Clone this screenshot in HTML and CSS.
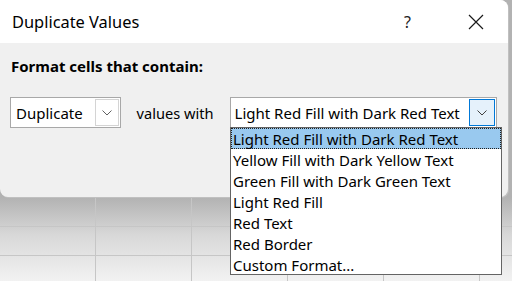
FILE: index.html
```html
<!DOCTYPE html>
<html>
<head>
<meta charset="utf-8">
<link rel="stylesheet" href="styles.css">
</head>
<body>
<div class="sheet">
  <div class="dialog">
    <div class="titlebar">
      <span class="title">Duplicate Values</span>
      <span class="help">?</span>
      <span class="close">
        <svg width="16" height="16" viewBox="0 0 16 16"><path d="M1 1 L15 15 M15 1 L1 15" stroke="#1a1a1a" stroke-width="1.2" fill="none"/></svg>
      </span>
    </div>
    <div class="content">
      <div class="label">Format cells that contain:</div>
      <div class="row">
        <div class="combo combo-small">
          <span class="combo-text">Duplicate</span>
          <span class="btn">
            <svg width="10" height="6" viewBox="0 0 10 6"><path d="M0.5 0.5 L5 5 L9.5 0.5" stroke="#606060" stroke-width="1" fill="none"/></svg>
          </span>
        </div>
        <span class="values">values with</span>
        <div class="combo combo-big">
          <span class="combo-text">Light Red Fill with Dark Red Text</span>
          <span class="btn btn-active">
            <svg width="10" height="6" viewBox="0 0 10 6"><path d="M0.5 0.5 L5 5 L9.5 0.5" stroke="#404040" stroke-width="1" fill="none"/></svg>
          </span>
        </div>
      </div>
    </div>
    <ul class="list">
      <li class="sel">Light Red Fill with Dark Red Text</li>
      <li>Yellow Fill with Dark Yellow Text</li>
      <li>Green Fill with Dark Green Text</li>
      <li>Light Red Fill</li>
      <li>Red Text</li>
      <li>Red Border</li>
      <li>Custom Format...</li>
    </ul>
  </div>
</div>
</body>
</html>
```
FILE: styles.css
```css
html, body {
  margin: 0;
  padding: 0;
}
body {
  width: 512px;
  height: 281px;
  overflow: hidden;
  font-family: "Noto Sans", "Open Sans", sans-serif;
  color: #000;
}
.sheet {
  width: 512px;
  height: 281px;
  background-color: #f4f4f4;
  background-image:
    linear-gradient(to right, transparent 95px, #c6c6c6 95px, #c6c6c6 96px, transparent 96px),
    linear-gradient(to bottom, transparent 226px, #c6c6c6 226px, #c6c6c6 227px, transparent 227px, transparent 255px, #c6c6c6 255px, #c6c6c6 256px, transparent 256px),
    linear-gradient(to bottom, #b2b2b2 197px, #d8d8d8 235px, #f2f2f2 281px);
  background-size: 96px 281px, 512px 281px, 512px 281px;
  background-repeat: repeat-x, no-repeat, no-repeat;
}
.dialog {
  position: relative;
  width: 508px;
  height: 197px;
  background: #f0f0f0;
  border-radius: 0 8px 8px 8px;
  box-shadow: 1px 1px 0 #c0c0c0;
}
.titlebar {
  height: 43px;
  background: #fff;
  border-radius: 0 8px 0 0;
  display: flex;
  align-items: center;
  padding-left: 12px;
}
.title {
  font-size: 16.4px;
  flex: 1;
}
.help {
  font-size: 16px;
  margin-right: 57px;
  color: #222;
}
.close {
  display: flex;
  margin-right: 24px;
}
.content {
  padding: 13px 11px 0 10px;
}
.label {
  font-weight: bold;
  font-size: 15px;
  line-height: 20px;
  margin-left: 1px;
}
.row {
  display: flex;
  align-items: center;
  margin-top: 21px;
  font-size: 15px;
}
.combo {
  box-sizing: border-box;
  height: 31px;
  border: 1px solid #a8a8a8;
  background: #fff;
  display: flex;
  align-items: center;
  padding: 1px 1px 1px 5px;
}
.combo-small {
  width: 112px;
}
.combo-big {
  width: 271px;
  padding-left: 4px;
}
.combo-text {
  flex: 1;
  white-space: nowrap;
}
.btn {
  box-sizing: border-box;
  width: 24px;
  height: 27px;
  border: 1px solid #d4d4d4;
  display: flex;
  align-items: center;
  justify-content: center;
  background: #fff;
}
.btn-active {
  width: 26px;
  border-color: #0078d7;
  background: #e5f1fb;
}
.values {
  white-space: nowrap;
  margin: 0 16px 0 16px;
  font-size: 14.6px;
}
.list {
  position: absolute;
  left: 230px;
  top: 127px;
  width: 272px;
  height: 148px;
  box-sizing: border-box;
  margin: 0;
  padding: 0;
  list-style: none;
  background: #fff;
  border: 1px solid #646464;
  font-size: 15px;
}
.list li {
  height: 21px;
  line-height: 22px;
  padding-left: 2px;
  white-space: nowrap;
  box-sizing: border-box;
}
.list li.sel {
  background: #99c9ef;
  border: 1px dotted #202020;
  padding-left: 1px;
  line-height: 20px;
}
```
